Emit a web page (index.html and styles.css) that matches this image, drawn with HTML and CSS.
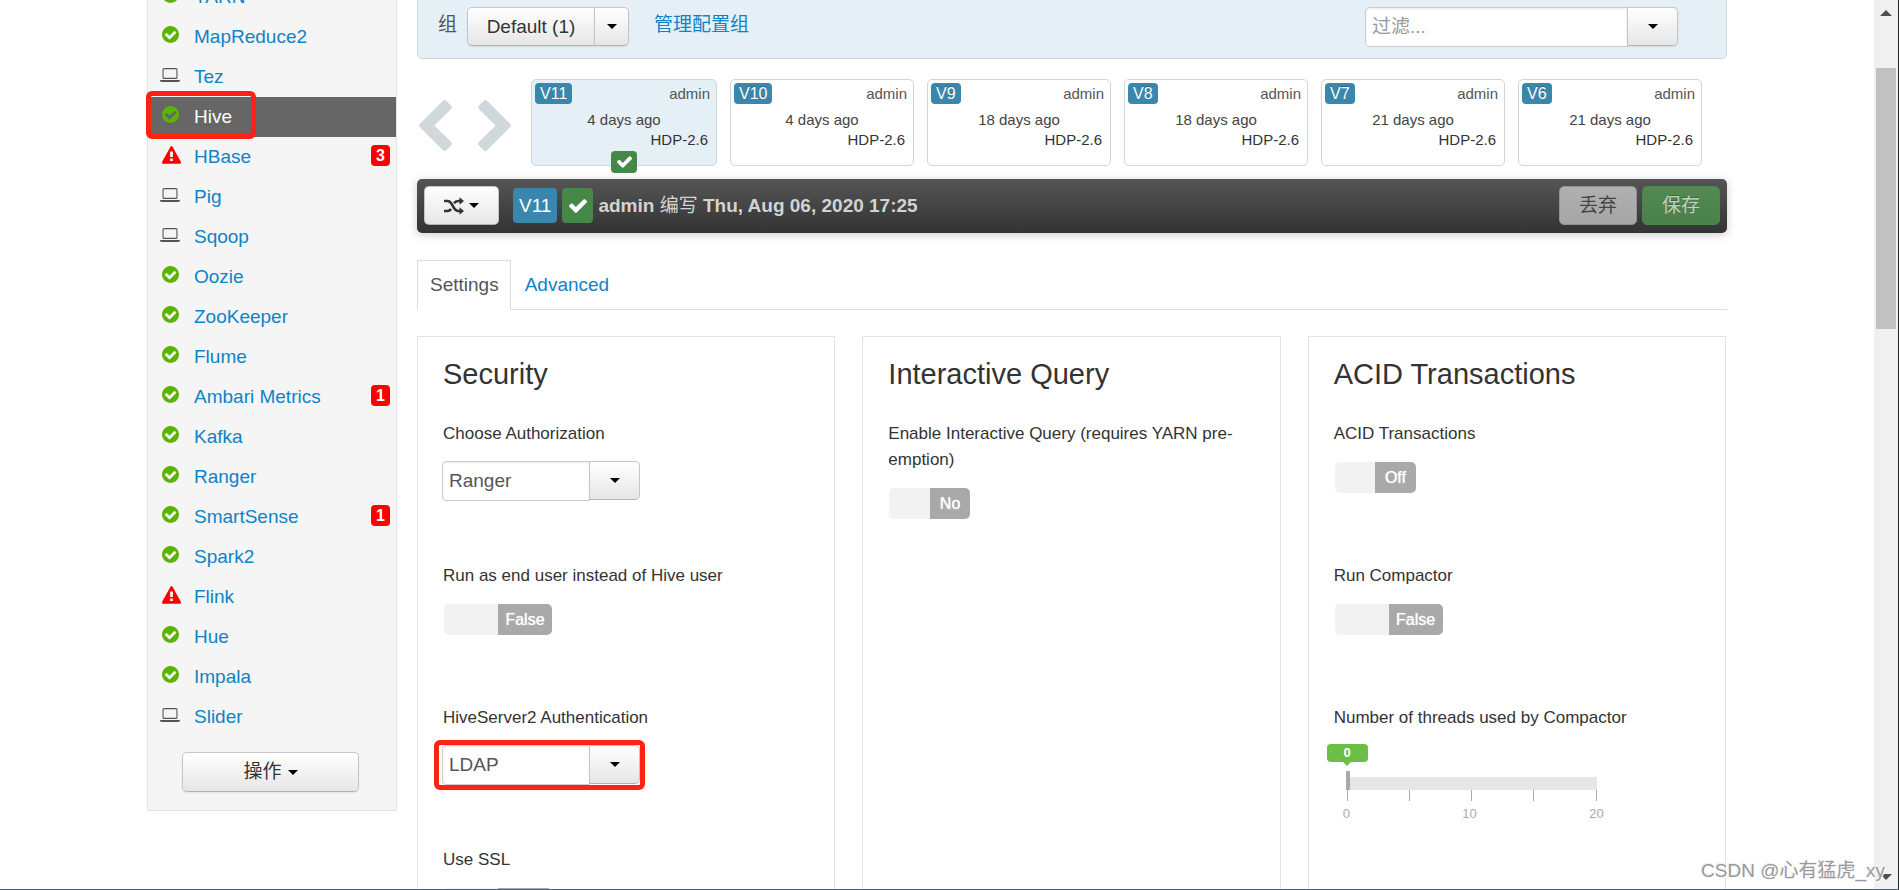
FILE: index.html
```html
<!DOCTYPE html>
<html lang="zh-CN">
<head>
<meta charset="utf-8">
<title>Ambari - Hive</title>
<link rel="stylesheet" href="styles.css">
</head>
<body>
<svg class="defs" aria-hidden="true">
  <symbol id="ok" viewBox="128 128 1536 1536"><path d="M1412 734q0-28-18-46l-91-90q-19-19-45-19t-45 19l-408 407-226-226q-19-19-45-19t-45 19l-91 90q-18 18-18 46 0 27 18 45l362 362q19 19 45 19 27 0 46-19l543-543q18-18 18-45zm252 162q0 209-103 385.5t-279.5 279.5-385.5 103-385.5-103-279.5-279.5-103-385.5 103-385.5 279.5-279.5 385.5-103 385.5 103 279.5 279.5 103 385.5z"/></symbol>
  <symbol id="warn" viewBox="0 0 1792 1664"><path d="M1024 1375v-190q0-14-9.5-23.5t-22.5-9.5h-192q-13 0-22.5 9.5t-9.5 23.5v190q0 14 9.5 23.5t22.5 9.5h192q13 0 22.5-9.5t9.5-23.5zm-2-374l18-459q0-12-10-19-13-11-24-11h-220q-11 0-24 11-10 7-10 21l17 457q0 10 10 16.5t24 6.5h185q14 0 23.5-6.5t10.5-16.5zm-14-934l768 1408q35 63-2 126-17 29-46.5 46t-63.5 17h-1536q-34 0-63.5-17t-46.5-46q-37-63-2-126l768-1408q17-31 47-49t65-18 65 18 47 49z"/></symbol>
  <symbol id="laptop" viewBox="0 0 20 14"><path fill-rule="evenodd" d="M4 0h12a1.500 1.500 0 0 1 1.500 1.500v8A1.500 1.500 0 0 1 16 11H4a1.500 1.500 0 0 1-1.500-1.500v-8A1.500 1.500 0 0 1 4 0zm0 1.200a.4.4 0 0 0-.4.4v7.800c0 .2.200.4.400.4h12a.4.4 0 0 0 .4-.4V1.600a.4.4 0 0 0-.4-.4z"/><path d="M0 12h20v.6c0 .8-.8 1.400-1.800 1.400H1.800C.8 14 0 13.400 0 12.600z"/></symbol>
  <symbol id="check" viewBox="121 334 1550 1188"><path d="M1671 566q0 40-28 68l-724 724-136 136q-28 28-68 28t-68-28l-136-136-362-362q-28-28-28-68t28-68l136-136q28-28 68-28t68 28l294 295 656-657q28-28 68-28t68 28l136 136q28 28 28 68z"/></symbol>
  <symbol id="chevron" viewBox="410 26 1036 1612"><path d="M1427 301l-531 531 531 531q19 19 19 45t-19 45l-166 166q-19 19-45 19t-45-19l-742-742q-19-19-19-45t19-45l742-742q19-19 45-19t45 19l166 166q19 19 19 45t-19 45z"/></symbol>
  <symbol id="shuffle" viewBox="0 0 20 18"><path fill="none" stroke="currentColor" stroke-width="2.600" d="M0 4h3.500c2.200 0 3.300 1.300 4.400 3.300l2.200 3.900C11.200 13.100 12.300 14 14.300 14H16M0 14h3.500c1.600 0 2.700-.7 3.600-2M10 6.200C11 4.700 12.300 4 14.300 4H16"/><path d="M15.500.2 20 4l-4.500 3.800zM15.500 10.200 20 14l-4.500 3.800z"/></symbol>
</svg>

<div class="window">
  <div class="page">
    <div class="container">
      <nav class="sidebar" aria-label="Services">
        <ul class="services">
          <li><a href="#"><svg class="icon ok"><use href="#ok"/></svg>YARN</a></li>
          <li><a href="#"><svg class="icon ok"><use href="#ok"/></svg>MapReduce2</a></li>
          <li><a href="#"><svg class="icon laptop"><use href="#laptop"/></svg>Tez</a></li>
          <li class="active"><a href="#"><svg class="icon ok"><use href="#ok"/></svg>Hive</a><span class="mark mark-service"></span></li>
          <li><a href="#"><svg class="icon warn"><use href="#warn"/></svg>HBase<span class="alerts">3</span></a></li>
          <li><a href="#"><svg class="icon laptop"><use href="#laptop"/></svg>Pig</a></li>
          <li><a href="#"><svg class="icon laptop"><use href="#laptop"/></svg>Sqoop</a></li>
          <li><a href="#"><svg class="icon ok"><use href="#ok"/></svg>Oozie</a></li>
          <li><a href="#"><svg class="icon ok"><use href="#ok"/></svg>ZooKeeper</a></li>
          <li><a href="#"><svg class="icon ok"><use href="#ok"/></svg>Flume</a></li>
          <li><a href="#"><svg class="icon ok"><use href="#ok"/></svg>Ambari Metrics<span class="alerts">1</span></a></li>
          <li><a href="#"><svg class="icon ok"><use href="#ok"/></svg>Kafka</a></li>
          <li><a href="#"><svg class="icon ok"><use href="#ok"/></svg>Ranger</a></li>
          <li><a href="#"><svg class="icon ok"><use href="#ok"/></svg>SmartSense<span class="alerts">1</span></a></li>
          <li><a href="#"><svg class="icon ok"><use href="#ok"/></svg>Spark2</a></li>
          <li><a href="#"><svg class="icon warn"><use href="#warn"/></svg>Flink</a></li>
          <li><a href="#"><svg class="icon ok"><use href="#ok"/></svg>Hue</a></li>
          <li><a href="#"><svg class="icon ok"><use href="#ok"/></svg>Impala</a></li>
          <li><a href="#"><svg class="icon laptop"><use href="#laptop"/></svg>Slider</a></li>
        </ul>
        <button class="btn actions" type="button">操作<span class="caret"></span></button>
      </nav>

      <main class="main">
        <div class="groups">
          <span class="groups-label">组</span>
          <div class="btn-group">
            <button class="btn group-name" type="button">Default (1)</button>
            <button class="btn group-toggle" type="button" aria-label="Select group"><span class="caret"></span></button>
          </div>
          <a class="manage" href="#">管理配置组</a>
          <div class="filter">
            <input class="filter-input" type="text" placeholder="过滤..." aria-label="过滤">
            <button class="btn filter-toggle" type="button" aria-label="Filter options"><span class="caret"></span></button>
          </div>
        </div>

        <div class="versions">
          <button class="arrow" type="button" aria-label="Previous"><svg><use href="#chevron"/></svg></button>
          <button class="arrow arrow-next" type="button" aria-label="Next"><svg><use href="#chevron"/></svg></button>
          <div class="version-list">
            <article class="version current"><span class="tag">V11</span><span class="author">admin</span><span class="when">4 days ago</span><span class="stack">HDP-2.6</span><span class="current-mark"><svg class="tick"><use href="#check"/></svg></span></article>
            <article class="version"><span class="tag">V10</span><span class="author">admin</span><span class="when">4 days ago</span><span class="stack">HDP-2.6</span></article>
            <article class="version"><span class="tag">V9</span><span class="author">admin</span><span class="when">18 days ago</span><span class="stack">HDP-2.6</span></article>
            <article class="version"><span class="tag">V8</span><span class="author">admin</span><span class="when">18 days ago</span><span class="stack">HDP-2.6</span></article>
            <article class="version"><span class="tag">V7</span><span class="author">admin</span><span class="when">21 days ago</span><span class="stack">HDP-2.6</span></article>
            <article class="version"><span class="tag">V6</span><span class="author">admin</span><span class="when">21 days ago</span><span class="stack">HDP-2.6</span></article>
          </div>
        </div>

        <div class="toolbar">
          <button class="btn switch" type="button" aria-label="Switch version"><svg class="shuffle"><use href="#shuffle"/></svg><span class="caret"></span></button>
          <span class="big-tag">V11</span>
          <span class="big-tag big-check"><svg class="big-tick"><use href="#check"/></svg></span>
          <p class="edited"><b>admin</b> 编写 <b>Thu, Aug 06, 2020 17:25</b></p>
          <button class="btn discard" type="button" disabled>丢弃</button>
          <button class="btn save" type="button" disabled>保存</button>
        </div>

        <div class="tabs">
          <a class="tab selected" href="#">Settings</a>
          <a class="tab" href="#">Advanced</a>
        </div>

        <div class="cards">
          <section class="card">
            <h2>Security</h2>
            <div class="field">
              <label class="name" for="auth">Choose Authorization</label>
              <div class="combo"><select id="auth"><option>Ranger</option></select><span class="combo-button"><span class="caret"></span></span></div>
            </div>
            <div class="field">
              <label class="name" for="doas">Run as end user instead of Hive user</label>
              <div class="toggle"><input id="doas" type="checkbox"><span class="rest"></span><span class="state">False</span></div>
            </div>
            <div class="field">
              <label class="name" for="hs2">HiveServer2 Authentication</label>
              <div class="combo"><select id="hs2"><option>LDAP</option></select><span class="combo-button"><span class="caret"></span></span><span class="mark mark-combo"></span></div>
            </div>
            <div class="field">
              <label class="name" for="ssl">Use SSL</label>
              <div class="toggle"><input id="ssl" type="checkbox"><span class="rest"></span><span class="state"></span></div>
            </div>
          </section>
          <section class="card">
            <h2>Interactive Query</h2>
            <div class="field">
              <label class="name" for="iq">Enable Interactive Query (requires YARN pre-emption)</label>
              <div class="toggle short"><input id="iq" type="checkbox"><span class="rest"></span><span class="state">No</span></div>
            </div>
          </section>
          <section class="card">
            <h2>ACID Transactions</h2>
            <div class="field">
              <label class="name" for="acid">ACID Transactions</label>
              <div class="toggle short"><input id="acid" type="checkbox"><span class="rest"></span><span class="state">Off</span></div>
            </div>
            <div class="field">
              <label class="name" for="compact">Run Compactor</label>
              <div class="toggle"><input id="compact" type="checkbox"><span class="rest"></span><span class="state">False</span></div>
            </div>
            <div class="field">
              <label class="name" for="threads">Number of threads used by Compactor</label>
              <div class="slider">
                <output class="bubble" for="threads">0</output>
                <input id="threads" type="range" min="0" max="20" value="0">
                <div class="ticks"><i></i><i></i><i></i><i></i><i></i></div>
                <div class="scale"><span>0</span><span>10</span><span>20</span></div>
              </div>
            </div>
          </section>
        </div>
      </main>
    </div>
  </div>
  <div class="scrollbar"><span class="up"></span><span class="thumb"></span><span class="down"></span></div>
  <div class="watermark">CSDN @心有猛虎_xy</div>
</div>
</body>
</html>
```

FILE: styles.css
```css
* { box-sizing: border-box; }

body {
  margin: 0;
  color: #333;
  background: #fff;
  font: 19px/26px "Liberation Sans", "Noto Sans CJK SC", sans-serif;
}

button, input, select { font: inherit; color: inherit; margin: 0; }
a { color: #0d83c9; text-decoration: none; }
.defs { position: absolute; width: 0; height: 0; }
svg { fill: currentColor; display: block; }

.window {
  position: relative;
  display: flex;
  height: 100vh;
  overflow: hidden;
  border-right: 1px solid #22282c;
  border-bottom: 1px solid #456876;
}

.page { flex: 1; overflow: hidden; }

.container {
  display: flex;
  align-items: flex-start;
  gap: 20px;
  max-width: 1580px;
  margin: 0 auto;
}

/* Sidebar */
.sidebar {
  flex: 0 0 250px;
  margin-top: -23px;
  padding-bottom: 18px;
  background: #f5f5f5;
  border: 1px solid #e3e3e3;
  border-top: 0;
}

.services { margin: 0; padding: 0; list-style: none; }
.services li { position: relative; }

.services a {
  display: flex;
  align-items: center;
  height: 40px;
  padding: 0 6px 0 12px;
}

.services .active { background: #666; }
.services .active a { color: #fff; }

.icon { flex: none; margin-bottom: 5px; }
.icon.ok { width: 17px; height: 17px; margin-left: 2px; margin-right: 15px; color: #5ab400; }
.icon.warn { width: 19px; height: 18px; margin-left: 2px; margin-right: 13px; color: #f00; }
.icon.laptop { width: 20px; height: 14px; margin-right: 14px; color: #555; }

.alerts {
  margin-left: auto;
  margin-bottom: 3px;
  width: 19px;
  border-radius: 4px;
  background: #f00;
  color: #fff;
  font-size: 16px;
  font-weight: bold;
  line-height: 21px;
  text-align: center;
}

.mark {
  position: absolute;
  z-index: 2;
  border: 5px solid #ff2114;
  border-radius: 6px;
  pointer-events: none;
}

.mark-service { left: -2px; top: -6px; width: 110px; height: 48px; }
.mark-combo { inset: -5px -5px -5px -8px; }

/* Buttons */
.btn {
  display: flex;
  align-items: center;
  justify-content: center;
  height: 39px;
  padding: 0;
  border: 1px solid #c5c5c5;
  border-bottom-color: #b3b3b3;
  border-radius: 5px;
  background: linear-gradient(#fff, #e6e6e6);
  box-shadow: 0 1px 2px rgba(0, 0, 0, .08);
  color: #333;
}

.caret {
  width: 0;
  height: 0;
  border: 5px solid transparent;
  border-top-color: #000;
  border-bottom: 0;
}

.actions { width: 177px; height: 40px; margin: 15px 0 0 34px; gap: 6px; }

/* Config groups */
.main { flex: 1; min-width: 0; }

.groups {
  display: flex;
  align-items: flex-start;
  height: 59px;
  padding: 7px 48px 0 20px;
  background: #e4f0f5;
  border: 1px solid #cdd6da;
  border-top: 0;
  border-radius: 0 0 5px 5px;
}

.groups-label { width: 29px; line-height: 36px; color: #555; }
.btn-group { display: flex; }
.group-name { width: 128px; border-radius: 5px 0 0 5px; }
.group-toggle { width: 35px; margin-left: -1px; border-radius: 0 5px 5px 0; }
.manage { margin-left: 25px; line-height: 36px; }

.filter { display: flex; width: 313px; margin-left: auto; }

.filter-input {
  flex: 1;
  min-width: 0;
  height: 40px;
  padding: 0 6px;
  border: 1px solid #ccc;
  border-radius: 5px 0 0 5px;
  background: #fff;
  box-shadow: inset 0 1px 2px rgba(0, 0, 0, .08);
}

.filter-input::placeholder { color: #999; }
.filter-toggle { width: 51px; margin-left: -1px; border-radius: 0 5px 5px 0; }

/* Version history */
.versions {
  display: flex;
  align-items: center;
  margin-top: 20px;
  padding: 0 25px 0 2px;
}

.arrow {
  margin: 6px 26px 0 0;
  padding: 0;
  border: 0;
  background: none;
  color: #d1d8dc;
}

.arrow svg { width: 33px; height: 51px; }
.arrow-next { margin-right: 20px; }
.arrow-next svg { transform: scaleX(-1); }

.version-list {
  flex: 1;
  display: grid;
  grid-template-columns: 186fr repeat(5, 184fr);
  gap: 13px;
}

.version {
  position: relative;
  display: grid;
  grid-template-columns: auto 1fr;
  grid-template-rows: 21px 26px 20px;
  align-items: end;
  align-content: start;
  height: 87px;
  padding: 3px 6px 0 3px;
  border: 1px solid #cdd6da;
  border-radius: 5px;
  font-size: 15px;
  line-height: 20px;
}

.version.current { background: #e4f0f5; }

.tag {
  padding: 0 5px;
  border-radius: 4px;
  background: #3a87ad;
  color: #fff;
  font-size: 16px;
  line-height: 21px;
  text-shadow: 0 -1px 0 rgba(0, 0, 0, .25);
}

.author { text-align: right; color: #555; }
.when { grid-column: 1 / 3; padding-left: 3px; text-align: center; color: #444; }
.stack { grid-column: 1 / 3; padding-right: 2px; text-align: right; }

.current-mark {
  position: absolute;
  left: 50%;
  bottom: -8px;
  display: grid;
  place-items: center;
  width: 26px;
  height: 22px;
  margin-left: -13px;
  border-radius: 4px;
  background: #468847;
  color: #fff;
}

.tick { width: 15px; height: 12px; }

/* Toolbar */
.toolbar {
  display: flex;
  align-items: center;
  gap: 5px;
  height: 54px;
  margin-top: 13px;
  padding: 0 7px 1px;
  border-radius: 5px;
  background: linear-gradient(#555, #333);
  box-shadow: 0 2px 10px rgba(0, 0, 0, .2);
}

.switch { width: 75px; margin-right: 9px; gap: 5px; }
.shuffle { width: 20px; height: 18px; }

.big-tag {
  display: grid;
  place-items: center;
  height: 35px;
  padding: 0 6px;
  border-radius: 4px;
  background: #3a87ad;
  color: #fff;
}

.big-check { width: 31px; background: #468847; }
.big-tick { width: 18px; height: 14px; }
.edited { flex: 1; margin: 0; color: #d3d3d3; white-space: nowrap; }

.discard, .save { width: 78px; box-shadow: none; }
.discard { border-color: #929292; background: linear-gradient(#b0b0b0, #a6a6a6); color: #444; }
.save { border-color: #468847; background: linear-gradient(#528b52, #4a8049); color: #c3d0c3; text-shadow: 0 -1px 0 rgba(0, 0, 0, .25); }

/* Tabs */
.tabs {
  display: flex;
  height: 50px;
  margin-top: 27px;
  border-bottom: 1px solid #ddd;
}

.tab {
  height: 50px;
  padding: 0 14px;
  border-top: 1px solid transparent;
  line-height: 48px;
}

.tab.selected {
  padding: 0 11px 0 12px;
  border: 1px solid #ddd;
  border-bottom-color: #fff;
  background: #fff;
  color: #555;
}

/* Setting cards */
.cards {
  display: grid;
  grid-template-columns: repeat(3, 1fr);
  gap: 27px;
  margin-top: 26px;
  padding-right: 1px;
}

.card {
  min-height: 600px;
  padding: 17px 25px 0;
  border: 1px solid #e3e3e3;
}

.card h2 {
  margin: 0 0 27px;
  font-size: 29px;
  font-weight: normal;
  line-height: 40px;
}

.field { height: 142px; font-size: 17px; }
.name { display: block; }

.combo { position: relative; display: flex; width: 198px; margin: 14px 0 0 -1px; font-size: 19px; }

.combo select {
  flex: 1;
  height: 40px;
  padding: 0 6px;
  border: 1px solid #ccc;
  border-radius: 4px 0 0 4px;
  background: #fff;
  box-shadow: inset 0 1px 2px rgba(0, 0, 0, .08);
  color: #555;
  appearance: none;
}

.combo-button {
  display: grid;
  place-items: center;
  width: 51px;
  height: 39px;
  margin-left: -1px;
  border: 1px solid #c5c5c5;
  border-bottom-color: #b3b3b3;
  border-radius: 0 5px 5px 0;
  background: linear-gradient(#fff, #e6e6e6);
  pointer-events: none;
}

.toggle {
  position: relative;
  display: grid;
  grid-template-columns: 1fr 1fr;
  width: 108px;
  height: 31px;
  margin: 15px 0 0 1px;
  border-radius: 5px;
  overflow: hidden;
  font-size: 16px;
  line-height: 31px;
}

.toggle.short { width: 81px; }
.toggle input { position: absolute; inset: 0; width: 100%; height: 100%; opacity: 0; }
.rest { background: #f2f2f2; }
.state { background: #a9a9a9; color: #fff; text-align: center; text-shadow: 0 0 1px #fff; }

/* Thread slider */
.slider { width: 251px; margin: 13px 0 0 12px; color: #aaa; font-size: 13px; }

.bubble {
  position: relative;
  display: block;
  width: 41px;
  margin-left: -19px;
  border-radius: 4px;
  background: #6cbe45;
  color: #fff;
  font-weight: bold;
  line-height: 18px;
  text-align: center;
}

.bubble::after {
  content: "";
  position: absolute;
  left: 50%;
  top: 100%;
  margin-left: -4px;
  border: 4px solid transparent;
  border-top-color: #6cbe45;
  border-bottom: 0;
}

.slider input {
  display: block;
  width: 100%;
  height: 19px;
  margin-top: 9px;
  padding-top: 6px;
  background: none;
  appearance: none;
}

.slider input::-webkit-slider-runnable-track { height: 13px; background: #e6e6e6; }
.slider input::-webkit-slider-thumb { width: 4px; height: 19px; margin-top: -6px; background: #a9a9a9; appearance: none; }
.ticks { display: flex; justify-content: space-between; height: 11px; padding-left: 1px; }
.ticks i { width: 1px; background: #aaa; }
.scale { display: flex; justify-content: space-between; margin: 3px -7px 0 -3px; line-height: 20px; }

/* Browser scrollbar */
.scrollbar {
  flex: 0 0 24px;
  display: flex;
  flex-direction: column;
  align-items: center;
  padding: 10px 0 9px;
  background: #f0f0f0;
}

.up, .down { border: 6px solid transparent; }
.up { border-top: 0; border-bottom-color: #505050; }
.down { margin-top: auto; border-bottom: 0; border-top-color: #505050; }
.thumb { width: 20px; height: 261px; margin-top: 52px; background: #c1c1c1; }

.watermark {
  position: absolute;
  right: 13px;
  bottom: 5px;
  color: #999;
  text-shadow: 1px 1px 0 #fff, -1px -1px 0 #eee;
}
```
